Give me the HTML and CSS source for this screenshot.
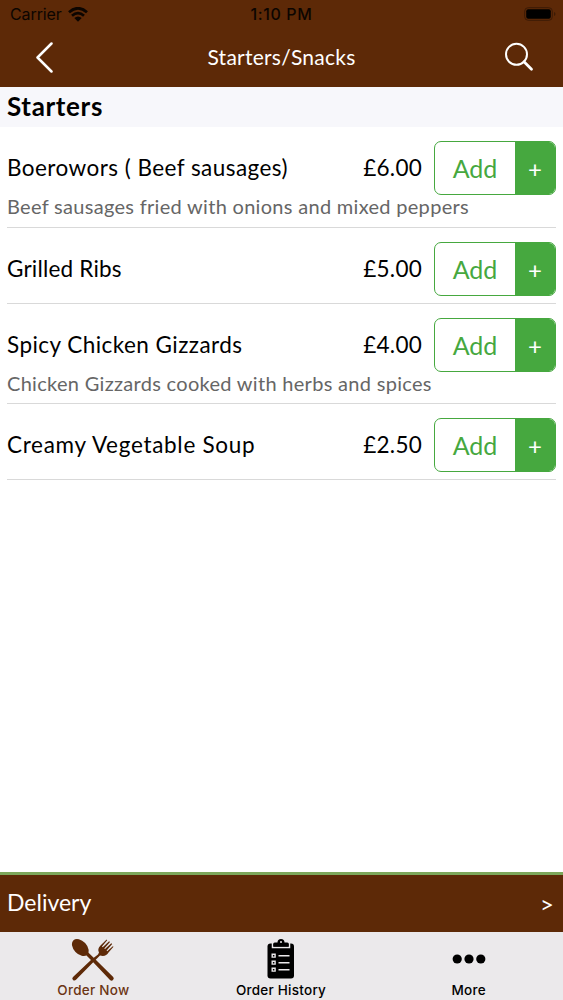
FILE: index.html
```html
<!DOCTYPE html>
<html>
<head>
    <meta charset="utf-8" />
    <title>Starters/Snacks</title>
    <link rel="stylesheet" href="styles.css">
</head>
<body>
    <div class="app">
        <header class="top">
            <div class="status">
                <div class="carrier">
                    <span>Carrier</span>
                    <svg width="20" height="15" viewBox="0 0 20 15">
                        <path d="M1 5.2Q10-2.6 19 5.2M4 8.7Q10 3.6 16 8.7" fill="none" stroke="#0c0501" stroke-width="2.8" />
                        <path d="M6.3 10.9Q10 7.9 13.7 10.9L10 14.8Z" fill="#0c0501" />
                    </svg>
                </div>
                <div class="time">1:10 PM</div>
                <svg class="battery" width="32" height="14" viewBox="0 0 32 14">
                    <rect x=".7" y=".7" width="27.6" height="12.6" rx="3.5" fill="none" stroke="#3c1b06" />
                    <rect x="2.2" y="2.2" width="24.6" height="9.6" rx="2" />
                    <path d="M30 5v4q1.5-.6 1.5-2T30 5" fill="#3c1b06" />
                </svg>
            </div>
            <div class="nav">
                <svg width="18" height="32" viewBox="0 0 18 32">
                    <path d="M16.500 2.500L2.500 16.500L16.500 30.500" fill="none" stroke="#fff" stroke-width="2.5" stroke-linecap="round" stroke-linejoin="round" />
                </svg>
                <div class="title">Starters/Snacks</div>
                <svg width="30" height="30" viewBox="0 0 30 30">
                    <circle cx="11.500" cy="12.300" r="10.500" fill="none" stroke="#fff" stroke-width="2" />
                    <path d="M19 19.800L26.500 27.300" stroke="#fff" stroke-width="2.8" stroke-linecap="round" />
                </svg>
            </div>
        </header>

        <h1 class="section">Starters</h1>

        <div class="menu">
            <div class="item">
                <div class="line">
                    <span class="name">Boerowors ( Beef sausages)</span>
                    <span class="price">£6.00</span>
                    <button class="add" type="button"><span class="word">Add</span><span class="plus">+</span></button>
                </div>
                <p class="about">Beef sausages fried with onions and mixed peppers</p>
            </div>
            <div class="item">
                <div class="line">
                    <span class="name ribs">Grilled Ribs</span>
                    <span class="price">£5.00</span>
                    <button class="add" type="button"><span class="word">Add</span><span class="plus">+</span></button>
                </div>
            </div>
            <div class="item">
                <div class="line">
                    <span class="name">Spicy Chicken Gizzards</span>
                    <span class="price">£4.00</span>
                    <button class="add" type="button"><span class="word">Add</span><span class="plus">+</span></button>
                </div>
                <p class="about">Chicken Gizzards cooked with herbs and spices</p>
            </div>
            <div class="item">
                <div class="line">
                    <span class="name soup">Creamy Vegetable Soup</span>
                    <span class="price">£2.50</span>
                    <button class="add" type="button"><span class="word">Add</span><span class="plus">+</span></button>
                </div>
            </div>
        </div>

        <div class="delivery">
            <span>Delivery</span>
            <span class="more">&gt;</span>
        </div>

        <nav class="tabs">
            <div class="tab active">
                <svg width="44" height="44" viewBox="0 0 44 44">
                    <g fill="#5e2a08">
                        <ellipse cx="9.3" cy="9.5" rx="6.6" ry="10" transform="rotate(-43 9.3 9.5)" />
                        <path d="M14 16L16.500 13.700L24 21L42.200 39Q43.500 40.500 42 42Q40.500 43.300 39 41.900L21.500 23.500Z" />
                        <path d="M28 14.500L27 16.500L20.500 21.500L2 39Q.5 40.500 2 42Q3.500 43.300 5 41.800L22.700 23.800L29 17.500Q35 19 37.500 14.500L42.500 8.800L41.800 8.200L36.200 13.200L35.600 12.600L41.200 6L40.300 5.200L34 11L33.300 10.400L39 4L38.100 3.200L31.700 9.200L31 8.600L36.200 2.300L35.600 1.600L29.500 7.500Q26 11 28 14.500Z" />
                    </g>
                </svg>
                <span>Order Now</span>
            </div>
            <div class="tab">
                <svg width="28" height="40" viewBox="0 0 28 40">
                    <rect x=".5" y="4.500" width="26.500" height="35" rx="3" />
                    <path d="M5.500 2V8.500H22.500V2" fill="none" stroke="#ebe9eb" stroke-width="1.500" />
                    <path d="M6.500 7.500V4.500Q6.500 3.500 8 3.500H10.500Q10.500 0 14 0T17.500 3.500H20Q21.500 3.500 21.500 4.500V7.500Z" />
                    <circle cx="14" cy="3" r="1" fill="#ebe9eb" />
                    <g fill="none" stroke="#ebe9eb" stroke-width="1.400">
                        <path d="M5.200 15.200h2.900v2.900h-2.900zM5.200 22.200h2.900v2.900h-2.900zM5.200 29.200h2.900v2.900h-2.900z" />
                        <path d="M11.500 16.700h11M11.500 23.700h11M11.500 30.700h11" />
                    </g>
                </svg>
                <span>Order History</span>
            </div>
            <div class="tab">
                <svg width="34" height="40" viewBox="0 0 34 40">
                    <circle cx="5.200" cy="20" r="4.600" />
                    <circle cx="17" cy="20" r="4.600" />
                    <circle cx="28.800" cy="20" r="4.600" />
                </svg>
                <span>More</span>
            </div>
        </nav>
    </div>
</body>
</html>
```
FILE: styles.css
```css
body {
    margin: 0;
    background-color: #fff;
    color: #000;
    font-family: Lato, "Liberation Sans", sans-serif;
}
svg {
    display: block;
}
.app {
    display: flex;
    flex-direction: column;
    height: 1000px;
}
.top {
    height: 87px;
    background-color: #5d2907;
}
.status {
    display: grid;
    grid-template-columns: 1fr auto 1fr;
    align-items: center;
    height: 28px;
    padding: 0 10px;
    color: #0c0501;
    font-family: Inter, sans-serif;
    font-size: 16px;
}
.carrier {
    display: flex;
    gap: 6px;
    align-items: center;
    letter-spacing: -0.1px;
}
.time {
    font-weight: 500;
    letter-spacing: 0.6px;
}
.battery {
    justify-self: end;
    margin-right: -3px;
}
.nav {
    display: grid;
    grid-template-columns: 28px 1fr 28px;
    align-items: center;
    height: 58px;
    padding: 0 30px 0 35px;
    color: #fff;
}
.title {
    padding: 0 5px 2px 0;
    text-align: center;
    font-size: 21px;
    letter-spacing: 0.25px;
}
.section {
    height: 40px;
    margin: 0;
    padding-left: 7px;
    background-color: #f7f7fb;
    font-size: 26px;
    line-height: 39px;
    letter-spacing: 0.65px;
}
.menu {
    flex: 1;
    padding: 0 7px;
}
.item {
    padding: 14px 0 8px;
    border-bottom: 1px solid #d9d9d9;
}
.item + .item {
    padding: 14px 0 7px;
}
.line {
    display: flex;
    align-items: center;
    height: 54px;
}
.name {
    flex: 1;
    padding-bottom: 2px;
    font-size: 22.5px;
    letter-spacing: 0.45px;
}
.ribs {
    letter-spacing: 0.2px;
}
.soup {
    letter-spacing: 0.7px;
}
.price {
    margin-right: 12px;
    padding-bottom: 2px;
    font-size: 22.5px;
    letter-spacing: 0.25px;
}
.about {
    height: 24px;
    margin: 0;
    color: #666;
    font-size: 20px;
    line-height: 23px;
    letter-spacing: 0.3px;
}
.add {
    display: flex;
    width: 122px;
    height: 54px;
    padding: 0;
    overflow: hidden;
    background-color: #fff;
    border: 1.5px solid #46a83f;
    border-radius: 7px;
    color: #46a83f;
    font-family: inherit;
    font-size: 25px;
    line-height: 52px;
}
.word {
    flex: 1;
}
.plus {
    width: 40px;
    background-color: #46a83f;
    color: #fff;
    font-size: 24px;
    line-height: 54px;
}
.delivery {
    display: flex;
    justify-content: space-between;
    align-items: center;
    box-sizing: border-box;
    height: 60px;
    padding: 0 9px 3px 7px;
    border-top: 3px solid #7ca75b;
    background-color: #5d2907;
    color: #fff;
    font-size: 23px;
}
.more {
    padding-top: 2px;
    font-size: 24px;
}
.tabs {
    display: grid;
    grid-template-columns: 1fr 1fr 1fr;
    height: 68px;
    background-color: #ebe9eb;
    font-family: Inter, sans-serif;
    font-size: 13.5px;
    font-weight: 500;
    letter-spacing: 0.25px;
}
.tab {
    display: flex;
    flex-direction: column;
    align-items: center;
    justify-content: space-between;
    box-sizing: border-box;
    padding: 7px 1px 2px 0;
}
.active {
    padding-top: 6px;
    color: #6b3514;
}
```
